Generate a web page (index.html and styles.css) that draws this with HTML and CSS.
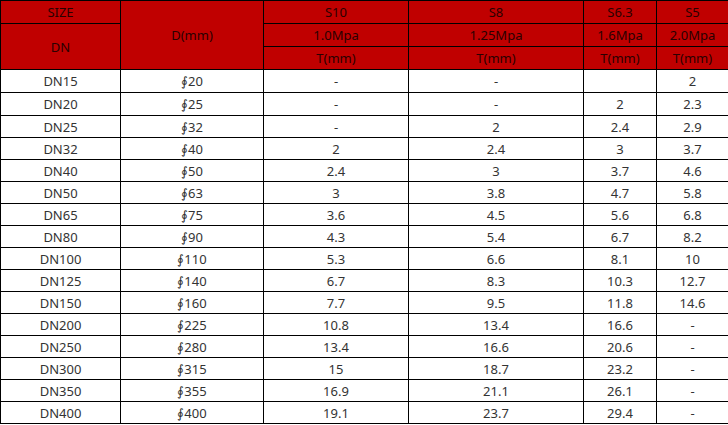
FILE: index.html
```html
<!DOCTYPE html>
<html>
<head>
<meta charset="utf-8">
<link rel="stylesheet" href="styles.css">
</head>
<body>
<table class="spec">
<colgroup>
<col class="c1"><col class="c2"><col class="c3"><col class="c4"><col class="c5"><col class="c6">
</colgroup>
<thead>
<tr class="h"><td>SIZE</td><td rowspan="3">D(mm)</td><td>S10</td><td>S8</td><td>S6.3</td><td>S5</td></tr>
<tr class="h"><td rowspan="2">DN</td><td>1.0Mpa</td><td>1.25Mpa</td><td>1.6Mpa</td><td>2.0Mpa</td></tr>
<tr class="h"><td>T(mm)</td><td>T(mm)</td><td>T(mm)</td><td>T(mm)</td></tr>
</thead>
<tbody>
<tr class="t"><td>DN15</td><td>∮20</td><td>-</td><td>-</td><td></td><td>2</td></tr>
<tr class="t"><td>DN20</td><td>∮25</td><td>-</td><td>-</td><td>2</td><td>2.3</td></tr>
<tr><td>DN25</td><td>∮32</td><td>-</td><td>2</td><td>2.4</td><td>2.9</td></tr>
<tr><td>DN32</td><td>∮40</td><td>2</td><td>2.4</td><td>3</td><td>3.7</td></tr>
<tr><td>DN40</td><td>∮50</td><td>2.4</td><td>3</td><td>3.7</td><td>4.6</td></tr>
<tr><td>DN50</td><td>∮63</td><td>3</td><td>3.8</td><td>4.7</td><td>5.8</td></tr>
<tr><td>DN65</td><td>∮75</td><td>3.6</td><td>4.5</td><td>5.6</td><td>6.8</td></tr>
<tr><td>DN80</td><td>∮90</td><td>4.3</td><td>5.4</td><td>6.7</td><td>8.2</td></tr>
<tr><td>DN100</td><td>∮110</td><td>5.3</td><td>6.6</td><td>8.1</td><td>10</td></tr>
<tr><td>DN125</td><td>∮140</td><td>6.7</td><td>8.3</td><td>10.3</td><td>12.7</td></tr>
<tr><td>DN150</td><td>∮160</td><td>7.7</td><td>9.5</td><td>11.8</td><td>14.6</td></tr>
<tr><td>DN200</td><td>∮225</td><td>10.8</td><td>13.4</td><td>16.6</td><td>-</td></tr>
<tr><td>DN250</td><td>∮280</td><td>13.4</td><td>16.6</td><td>20.6</td><td>-</td></tr>
<tr><td>DN300</td><td>∮315</td><td>15</td><td>18.7</td><td>23.2</td><td>-</td></tr>
<tr><td>DN350</td><td>∮355</td><td>16.9</td><td>21.1</td><td>26.1</td><td>-</td></tr>
<tr><td>DN400</td><td>∮400</td><td>19.1</td><td>23.7</td><td>29.4</td><td>-</td></tr>
</tbody>
</table>
</body>
</html>
```
FILE: styles.css
```css
html, body {
  margin: 0;
  padding: 0;
  background: #fff;
}
.spec {
  border-collapse: collapse;
  table-layout: fixed;
  width: 728px;
  font-family: "Noto Sans", "Open Sans", sans-serif;
  font-size: 13px;
  color: #333;
}
.c1 { width: 120px; }
.c2 { width: 143px; }
.c3 { width: 145px; }
.c4 { width: 175px; }
.c5 { width: 73px; }
.c6 { width: 72px; }
.spec td {
  border: 1px solid #000;
  text-align: center;
  vertical-align: middle;
  padding: 0;
  line-height: 16px;
  white-space: nowrap;
}
.spec thead td {
  background: #c00000;
  color: #2a0000;
}
.spec tr.h { height: 23px; }
.spec tbody tr { height: 22px; }
.spec tbody tr.t { height: 23px; }
```
